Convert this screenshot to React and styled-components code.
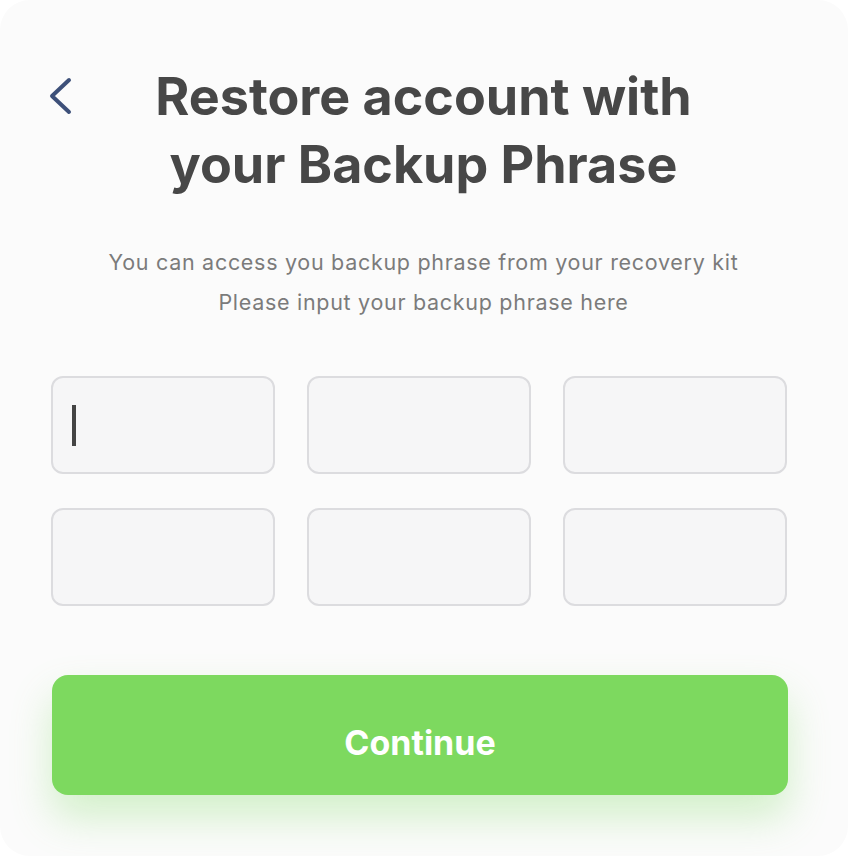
import React from "react";
import styled, { createGlobalStyle } from "styled-components";

const Global = createGlobalStyle`
  html, body { margin: 0; padding: 0; background: #ffffff; }
  body { font-family: Inter, "Noto Sans", "Liberation Sans", sans-serif; }
  * { box-sizing: border-box; }
`;

const Card = styled.main`
  width: 848px;
  height: 856px;
  background: #fbfbfb;
  border-radius: 30px;
  padding: 63px 52px 0 51px;
  display: flex;
  flex-direction: column;
`;

const Header = styled.header`
  display: grid;
  grid-template-columns: 40px 1fr 40px;
  align-items: start;
`;

const BackButton = styled.button`
  border: 0;
  background: none;
  padding: 0;
  margin: 14px 0 0 -2px;
  width: 24px;
  height: 38px;
  cursor: pointer;
  display: flex;
`;

const Title = styled.h1`
  margin: 0;
  text-align: center;
  font-size: 52px;
  line-height: 68px;
  font-weight: 700;
  color: #474747;
  letter-spacing: 0;
`;

const Hint = styled.p`
  margin: 43px 0 0;
  text-align: center;
  font-size: 21.5px;
  line-height: 40px;
  letter-spacing: 0.7px;
  color: #7b7b7b;
`;

const Grid = styled.div`
  margin-top: 54px;
  display: grid;
  grid-template-columns: repeat(3, 224px);
  column-gap: 32px;
  row-gap: 34px;
`;

const Field = styled.div`
  position: relative;
  height: 98px;
  background: #f6f6f7;
  border: 2px solid #dcdcdf;
  border-radius: 12px;
`;

const Caret = styled.span`
  position: absolute;
  left: 19px;
  top: 27px;
  width: 4px;
  height: 41px;
  background: #444;
`;

const Continue = styled.button`
  margin-top: 69px;
  width: 736px;
  margin-left: 1px;
  height: 120px;
  padding-top: 15px;
  border: 0;
  border-radius: 16px;
  background: #7dd95f;
  color: #ffffff;
  font-family: inherit;
  font-size: 34px;
  font-weight: 700;
  box-shadow: 0 22px 40px rgba(125, 217, 95, 0.32);
  cursor: pointer;
`;

export default function App() {
  const fields = [0, 1, 2, 3, 4, 5];
  return (
    <>
      <Global />
      <Card>
        <Header>
          <BackButton aria-label="Back">
            <svg width="24" height="38" viewBox="0 0 24 38">
              <path d="M20 3 L3 19 L20 35" fill="none" stroke="#3d5079" strokeWidth="4" strokeLinecap="round" strokeLinejoin="round" />
            </svg>
          </BackButton>
          <Title>
            Restore account with
            <br />
            your Backup Phrase
          </Title>
          <span />
        </Header>
        <Hint>
          You can access you backup phrase from your recovery kit
          <br />
          Please input your backup phrase here
        </Hint>
        <Grid>
          {fields.map((i) => (
            <Field key={i}>{i === 0 && <Caret />}</Field>
          ))}
        </Grid>
        <Continue>Continue</Continue>
      </Card>
    </>
  );
}
